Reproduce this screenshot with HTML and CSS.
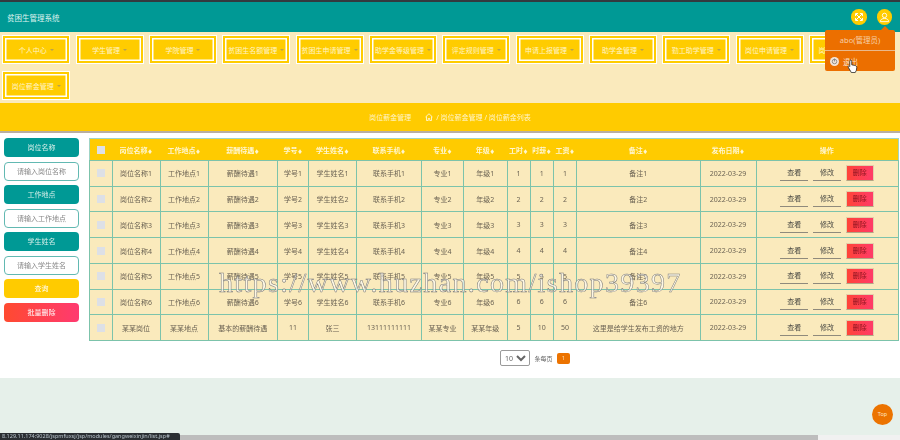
FILE: index.html
```html
<!DOCTYPE html>
<html lang="zh">
<head>
  <meta charset="utf-8">
  <title>岗位薪金列表</title>
  <link rel="stylesheet" href="styles.css">
</head>
<body>
  <div class="page">
    <header class="topbar">
      <div class="brand">贫困生管理系统</div>
      <div class="top-icons">
        <span class="round-icon">
          <svg viewBox="0 0 16 16" width="10" height="10" fill="none" stroke="#fff" stroke-width="1.6"><path d="M3 3l10 10M13 3L3 13M2.5 6.5v-4h4M9.5 2.5h4v4M13.5 9.5v4h-4M6.5 13.5h-4v-4"/></svg>
        </span>
        <span class="round-icon">
          <svg viewBox="0 0 16 16" width="11" height="11" fill="none" stroke="#fff" stroke-width="1.3"><circle cx="8" cy="5" r="3.2"/><path d="M2 14c0-3 2.5-4.6 6-4.6s6 1.6 6 4.6z"/></svg>
        </span>
      </div>
    </header>

    <div class="user-menu">
      <div class="user-name">abo(管理员)</div>
      <div class="user-logout">
        <svg viewBox="0 0 16 16" width="9" height="9"><circle cx="8" cy="8" r="8" fill="#f3e4d8"/><circle cx="8" cy="8" r="4" fill="none" stroke="#777" stroke-width="1.4"/><path d="M8 3v5" stroke="#777" stroke-width="1.4"/></svg>
        <span>退出</span>
      </div>
      <svg class="hand" viewBox="0 0 14 18" width="11" height="14"><path d="M4.5 1.5c1 0 1.500.6 1.500 1.500v4.500l4 .8c1.500.3 2.500 1.200 2.500 2.500l-.5 3.700-1.500 2.900H5.500L1.500 10.500c-.6-1 .6-2 1.600-1.200l.4.400V3c0-.9.400-1.500 1-1.500z" fill="#fff" stroke="#222" stroke-width="1"/></svg>
    </div>

    <nav class="nav">
      <a class="nav-btn">个人中心</a>
      <a class="nav-btn">学生管理</a>
      <a class="nav-btn">学院管理</a>
      <a class="nav-btn">贫困生名额管理</a>
      <a class="nav-btn">贫困生申请管理</a>
      <a class="nav-btn">助学金等级管理</a>
      <a class="nav-btn">评定规则管理</a>
      <a class="nav-btn">申请上报管理</a>
      <a class="nav-btn">助学金管理</a>
      <a class="nav-btn">勤工助学管理</a>
      <a class="nav-btn">岗位申请管理</a>
      <a class="nav-btn">岗位信息管理</a>
      <a class="nav-btn">岗位薪金管理</a>
    </nav>

    <div class="crumb">
      <span class="crumb-title">岗位薪金管理</span>
      <svg viewBox="0 0 16 16" width="8" height="8" fill="none" stroke="#fff" stroke-width="1.500"><path d="M1 8l7-6.500L15 8M3 7v8h3.500v-4h3v4H13V7"/></svg>
      <span>/ 岗位薪金管理 / 岗位薪金列表</span>
    </div>

    <main class="content">
      <aside class="filters">
        <div class="f-label">岗位名称</div>
        <div class="f-input">请输入岗位名称</div>
        <div class="f-label">工作地点</div>
        <div class="f-input">请输入工作地点</div>
        <div class="f-label">学生姓名</div>
        <div class="f-input">请输入学生姓名</div>
        <button class="f-btn search">查询</button>
        <button class="f-btn batch">批量删除</button>
      </aside>

      <section class="list">
        <table class="grid">
          <colgroup>
            <col class="c1"><col class="c2"><col class="c2"><col class="c3"><col class="c4"><col class="c2"><col class="c5"><col class="c6"><col class="c7"><col class="c8"><col class="c8"><col class="c8"><col class="c9"><col class="c10"><col class="c11">
          </colgroup>
          <thead>
            <tr>
              <th><i class="check"></i></th>
              <th>岗位名称<b>♦</b></th><th>工作地点<b>♦</b></th><th>薪酬待遇<b>♦</b></th><th>学号<b>♦</b></th><th>学生姓名<b>♦</b></th><th>联系手机<b>♦</b></th><th>专业<b>♦</b></th><th>年级<b>♦</b></th><th>工时<b>♦</b></th><th>时薪<b>♦</b></th><th>工资<b>♦</b></th><th>备注<b>♦</b></th><th>发布日期<b>♦</b></th><th>操作</th>
            </tr>
          </thead>
          <tbody>
            <tr>
              <td><i class="check"></i></td><td>岗位名称1</td><td>工作地点1</td><td>薪酬待遇1</td><td>学号1</td><td>学生姓名1</td><td>联系手机1</td><td>专业1</td><td>年级1</td><td>1</td><td>1</td><td>1</td><td>备注1</td><td>2022-03-29</td>
              <td><div class="ops"><a class="op">查看</a><a class="op">修改</a><a class="op del">删除</a></div></td>
            </tr>
            <tr>
              <td><i class="check"></i></td><td>岗位名称2</td><td>工作地点2</td><td>薪酬待遇2</td><td>学号2</td><td>学生姓名2</td><td>联系手机2</td><td>专业2</td><td>年级2</td><td>2</td><td>2</td><td>2</td><td>备注2</td><td>2022-03-29</td>
              <td><div class="ops"><a class="op">查看</a><a class="op">修改</a><a class="op del">删除</a></div></td>
            </tr>
            <tr>
              <td><i class="check"></i></td><td>岗位名称3</td><td>工作地点3</td><td>薪酬待遇3</td><td>学号3</td><td>学生姓名3</td><td>联系手机3</td><td>专业3</td><td>年级3</td><td>3</td><td>3</td><td>3</td><td>备注3</td><td>2022-03-29</td>
              <td><div class="ops"><a class="op">查看</a><a class="op">修改</a><a class="op del">删除</a></div></td>
            </tr>
            <tr>
              <td><i class="check"></i></td><td>岗位名称4</td><td>工作地点4</td><td>薪酬待遇4</td><td>学号4</td><td>学生姓名4</td><td>联系手机4</td><td>专业4</td><td>年级4</td><td>4</td><td>4</td><td>4</td><td>备注4</td><td>2022-03-29</td>
              <td><div class="ops"><a class="op">查看</a><a class="op">修改</a><a class="op del">删除</a></div></td>
            </tr>
            <tr>
              <td><i class="check"></i></td><td>岗位名称5</td><td>工作地点5</td><td>薪酬待遇5</td><td>学号5</td><td>学生姓名5</td><td>联系手机5</td><td>专业5</td><td>年级5</td><td>5</td><td>5</td><td>5</td><td>备注5</td><td>2022-03-29</td>
              <td><div class="ops"><a class="op">查看</a><a class="op">修改</a><a class="op del">删除</a></div></td>
            </tr>
            <tr>
              <td><i class="check"></i></td><td>岗位名称6</td><td>工作地点6</td><td>薪酬待遇6</td><td>学号6</td><td>学生姓名6</td><td>联系手机6</td><td>专业6</td><td>年级6</td><td>6</td><td>6</td><td>6</td><td>备注6</td><td>2022-03-29</td>
              <td><div class="ops"><a class="op">查看</a><a class="op">修改</a><a class="op del">删除</a></div></td>
            </tr>
            <tr>
              <td><i class="check"></i></td><td>某某岗位</td><td>某某地点</td><td>基本的薪酬待遇</td><td>11</td><td>张三</td><td>13111111111</td><td>某某专业</td><td>某某年级</td><td>5</td><td>10</td><td>50</td><td>这里是给学生发布工资的地方</td><td>2022-03-29</td>
              <td><div class="ops"><a class="op">查看</a><a class="op">修改</a><a class="op del">删除</a></div></td>
            </tr>
          </tbody>
        </table>

        <div class="pager">
          <select class="page-size"><option>10</option></select>
          <span class="page-text">条每页</span>
          <a class="page-num">1</a>
        </div>
      </section>
    </main>

    <footer class="foot"></footer>

    <div class="watermark">https://www.huzhan.com/ishop39397</div>
    <a class="to-top">Top</a>
    <div class="scrollbar"><div class="scroll-thumb"></div></div>
    <div class="status">8.129.11.174:9028/jspmfuxsj/jsp/modules/gangweixinjin/list.jsp#</div>
  </div>
</body>
</html>
```

FILE: styles.css
```css
html, body {
  margin: 0;
  height: 100%;
  overflow: hidden;
  background: #fff;
}

body {
  font-family: "Noto Sans", "Noto Sans CJK SC", sans-serif;
  font-size: 7px;
  color: #666;
}

.page {
  position: relative;
  width: 900px;
  height: 440px;
  overflow: hidden;
  filter: blur(0.35px);
}

/* top bar */
.topbar {
  display: flex;
  justify-content: space-between;
  align-items: center;
  height: 30px;
  padding: 0 8px 0 7px;
  border-top: 2px solid #33393f;
  background: #009995;
}

.brand {
  color: #dff3ef;
  font-size: 7.5px;
}

.top-icons {
  display: flex;
  gap: 10px;
}

.round-icon {
  display: flex;
  justify-content: center;
  align-items: center;
  width: 15.5px;
  height: 15.5px;
  border-radius: 50%;
  background: #ffcc00;
}

.user-menu {
  position: absolute;
  top: 30px;
  left: 825px;
  z-index: 5;
  width: 70px;
  height: 41px;
  border-radius: 2px;
  background: #ec6f00;
  color: #f6cfa8;
  font-size: 7.5px;
}

.user-menu::before {
  content: "";
  position: absolute;
  top: -4px;
  right: 6px;
  border-left: 4px solid transparent;
  border-right: 4px solid transparent;
  border-bottom: 4px solid #ec6f00;
}

.user-name {
  height: 20px;
  line-height: 20px;
  border-bottom: 1px solid #e9b98c;
  text-align: center;
}

.user-logout {
  display: flex;
  align-items: center;
  gap: 4px;
  height: 20px;
  padding-left: 5px;
  color: #fbe3cd;
}

.hand {
  position: absolute;
  top: 29px;
  left: 22px;
}

/* nav */
.nav {
  display: flex;
  flex-wrap: wrap;
  gap: 9px 7.33px;
  height: 63px;
  padding: 4px 3.3px;
  background: #faeabc;
}

.nav-btn {
  display: flex;
  justify-content: center;
  align-items: center;
  gap: 3px;
  box-sizing: border-box;
  width: 66px;
  height: 27px;
  border: 2px solid #ffcc00;
  background: #ffcc00;
  box-shadow: 0 0 0 1px #fff, inset 0 0 0 1.5px #fff;
  color: #fff4c8;
  font-size: 7px;
  white-space: nowrap;
}

.nav-btn::after {
  content: "";
  border-top: 2px solid #b9a24c;
  border-left: 2px solid transparent;
  border-right: 2px solid transparent;
}

.crumb {
  display: flex;
  justify-content: center;
  align-items: center;
  gap: 3px;
  height: 28px;
  border-bottom: 2px solid #b8aea0;
  background: #ffcb00;
  color: #fff4c8;
  font-size: 7px;
}

.crumb-title {
  margin-right: 11px;
}

/* content */
.content {
  display: flex;
  gap: 9.5px;
  padding: 5px 2.5px 0 4px;
}

.filters {
  display: flex;
  flex-direction: column;
  gap: 4.5px;
  flex: none;
  width: 75px;
}

.f-label, .f-input, .f-btn {
  box-sizing: border-box;
  height: 19px;
  border-radius: 4px;
  line-height: 19px;
  text-align: center;
  font-size: 7px;
}

.f-label {
  background: #009995;
  color: #d5efe9;
}

.f-input {
  border: 1px solid #62b9b2;
  background: #fff;
  line-height: 17px;
  color: #888;
}

.f-btn {
  padding: 0;
  border: 0;
  font-family: inherit;
  color: #fff;
}

.f-btn.search {
  background: #ffcb00;
}

.f-btn.batch {
  background: linear-gradient(90deg, #ff4a30, #ff3a70);
}

.list {
  flex: 1;
}

.grid {
  width: 809px;
  table-layout: fixed;
  border-collapse: collapse;
  border: 1px solid #9fd4c5;
  background: #faeabc;
}

.c1 { width: 23px; }
.c2 { width: 48px; }
.c3 { width: 69.5px; }
.c4 { width: 31px; }
.c5 { width: 65px; }
.c6 { width: 42px; }
.c7 { width: 43.5px; }
.c8 { width: 23.2px; }
.c9 { width: 123.5px; }
.c10 { width: 56px; }
.c11 { width: 142px; }

.grid th {
  height: 21px;
  padding: 0;
  background: #ffcb00;
  color: #fff6d0;
  font-size: 7px;
  font-weight: 700;
  white-space: nowrap;
}

.grid th b {
  font-size: 5px;
}

.grid td {
  height: 24.72px;
  padding: 0;
  border: 1px solid #7cc3ab;
  text-align: center;
  white-space: nowrap;
  color: #6b6354;
}

.check {
  display: block;
  width: 8px;
  height: 8px;
  margin: 0 auto;
  background: #dde0e6;
}

.ops {
  display: flex;
  justify-content: center;
  gap: 4.75px;
}

.op {
  box-sizing: border-box;
  width: 28px;
  height: 16px;
  border-bottom: 1px solid #8f8a7c;
  line-height: 16px;
  font-size: 7px;
  color: #4a4a44;
}

.op.del {
  border: 1px solid #e4cfa9;
  border-bottom-color: #b5a584;
  background: linear-gradient(90deg, #ff4438, #ff3b68);
  line-height: 14px;
  color: #8c1420;
}

/* pager */
.pager {
  display: flex;
  align-items: center;
  gap: 4.5px;
  height: 16px;
  padding: 9px 0 12px 411.5px;
}

.page-size {
  width: 30px;
  height: 16px;
  padding: 0;
  border: 1px solid #9a9a9a;
  border-radius: 2px;
  background: #fff;
  font-family: inherit;
  font-size: 7px;
  color: #666;
}

.page-text {
  font-size: 6px;
}

.page-num {
  width: 13px;
  height: 11px;
  border-radius: 2px;
  background: #ec7300;
  line-height: 11px;
  text-align: center;
  font-size: 6px;
  color: #ffdcae;
}

.foot {
  height: 63px;
  background: #e6f0ea;
}

/* things lying over the page */
.watermark {
  position: absolute;
  top: 266.5px;
  left: 219px;
  z-index: 3;
  font-family: "Liberation Serif", serif;
  font-size: 28px;
  letter-spacing: 1.35px;
  white-space: nowrap;
  color: rgba(255, 255, 255, 0.6);
  -webkit-text-stroke: 0.5px #777;
}

.to-top {
  position: absolute;
  top: 404px;
  left: 872px;
  z-index: 4;
  width: 21px;
  height: 21px;
  border-radius: 50%;
  background: #ec7300;
  line-height: 21px;
  text-align: center;
  font-size: 5.5px;
  color: #ffe3c2;
}

.scrollbar {
  position: absolute;
  bottom: 0;
  left: 0;
  z-index: 4;
  width: 100%;
  height: 5px;
  background: #f1f1f1;
}

.scroll-thumb {
  width: 818px;
  height: 100%;
  background: #bdbdbd;
}

.status {
  position: absolute;
  bottom: 0;
  left: 0;
  z-index: 5;
  width: 178px;
  height: 7px;
  padding-left: 2px;
  border-top-right-radius: 2px;
  background: #2b2f33;
  line-height: 7px;
  white-space: nowrap;
  overflow: hidden;
  font-size: 5.5px;
  color: #b9c4cc;
}
```
